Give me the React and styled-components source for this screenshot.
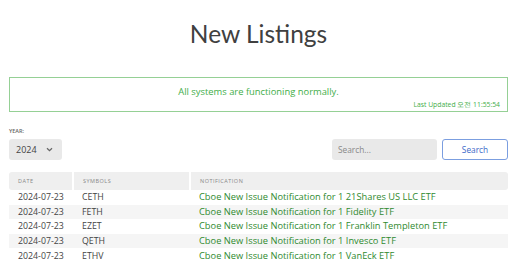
import React, { useState } from 'react';
import styled, { createGlobalStyle } from 'styled-components';

const GlobalStyle = createGlobalStyle`
  html, body {
    margin: 0;
    padding: 0;
    background: #ffffff;
    font-family: "Open Sans", "Noto Sans", sans-serif;
    color: #333333;
  }
  * { box-sizing: border-box; }
`;

const rows = [
  { date: '2024-07-23', symbol: 'CETH', note: 'Cboe New Issue Notification for 1 21Shares US LLC ETF' },
  { date: '2024-07-23', symbol: 'FETH', note: 'Cboe New Issue Notification for 1 Fidelity ETF' },
  { date: '2024-07-23', symbol: 'EZET', note: 'Cboe New Issue Notification for 1 Franklin Templeton ETF' },
  { date: '2024-07-23', symbol: 'QETH', note: 'Cboe New Issue Notification for 1 Invesco ETF' },
  { date: '2024-07-23', symbol: 'ETHV', note: 'Cboe New Issue Notification for 1 VanEck ETF' },
];

const App = () => {
  const [query, setQuery] = useState('');

  return (
    <>
      <GlobalStyle />
      <Page>
        <Title>New Listings</Title>

        <StatusBox>
          <StatusText>All systems are functioning normally.</StatusText>
          <Updated>Last Updated 오전 11:55:54</Updated>
        </StatusBox>

        <Controls>
          <YearGroup>
            <Label>YEAR:</Label>
            <Select>
              <span>2024</span>
              <svg width="7" height="5" viewBox="0 0 7 5">
                <path d="M1 1.2 L3.5 3.6 L6 1.2" fill="none" stroke="#666" strokeWidth="1.3" />
              </svg>
            </Select>
          </YearGroup>
          <SearchGroup>
            <SearchInput
              placeholder="Search..."
              value={query}
              onChange={(e) => setQuery(e.target.value)}
            />
            <SearchButton>Search</SearchButton>
          </SearchGroup>
        </Controls>

        <Table>
          <thead>
            <tr>
              <Th width="64px">Date</Th>
              <Th width="117px">Symbols</Th>
              <Th>Notification</Th>
            </tr>
          </thead>
          <tbody>
            {rows.map((r, i) => (
              <Row key={r.symbol} striped={i % 2 === 1}>
                <Td>{r.date}</Td>
                <Td>{r.symbol}</Td>
                <NoteTd>{r.note}</NoteTd>
              </Row>
            ))}
          </tbody>
        </Table>
      </Page>
    </>
  );
};

const Page = styled.div`
  padding: 0 4px 0 9px;
  width: 512px;
`;

const Title = styled.h1`
  margin: 0;
  padding-top: 16px;
  height: 77px;
  text-align: center;
  font-family: Lato, "Noto Sans", sans-serif;
  font-weight: 400;
  font-size: 24.5px;
  line-height: 36px;
  color: #404040;
`;

const StatusBox = styled.div`
  border: 1px solid #95d095;
  height: 35px;
  display: flex;
  flex-direction: column;
  align-items: center;
  padding-top: 6px;
`;

const StatusText = styled.div`
  color: #3fae49;
  font-size: 9.4px;
  line-height: 15px;
`;

const Updated = styled.div`
  align-self: flex-end;
  margin-right: 7px;
  color: #3fae49;
  font-size: 6.8px;
  line-height: 10px;
  margin-top: 1px;
`;

const Controls = styled.div`
  display: flex;
  justify-content: space-between;
  align-items: flex-end;
  margin-top: 15px;
`;

const YearGroup = styled.div`
  display: flex;
  flex-direction: column;
`;

const Label = styled.div`
  font-size: 5.5px;
  line-height: 8px;
  color: #666;
  font-weight: 600;
  margin-bottom: 4px;
`;

const Select = styled.div`
  width: 53px;
  height: 21px;
  background: #e9e9e9;
  border-radius: 3px;
  display: flex;
  align-items: center;
  justify-content: space-between;
  padding: 0 9px 0 7px;
  font-size: 9px;
  color: #444;
`;

const SearchGroup = styled.div`
  display: flex;
  gap: 5px;
`;

const SearchInput = styled.input`
  width: 105px;
  height: 21px;
  border: none;
  border-radius: 3px;
  background: #e9e9e9;
  padding: 0 6px;
  font-family: "Open Sans", sans-serif;
  font-size: 8.3px;
  color: #555;
  outline: none;
  &::placeholder { color: #888; }
`;

const SearchButton = styled.button`
  width: 66px;
  height: 21px;
  border: 1px solid #7b9ee0;
  border-radius: 3px;
  background: #fff;
  color: #3a68c8;
  font-family: "Open Sans", sans-serif;
  font-size: 8.3px;
  padding: 0;
`;

const Table = styled.table`
  width: 499px;
  margin-top: 12px;
  border-collapse: collapse;
`;

const Th = styled.th`
  width: ${({ width }) => width || 'auto'};
  height: 18px;
  background: #efefef;
  text-align: left;
  padding: 0 0 0 9px;
  font-size: 5.5px;
  font-weight: 400;
  letter-spacing: 0.5px;
  text-transform: uppercase;
  color: #888;
  border-right: 2px solid #fff;
  &:first-child { border-radius: 3px 0 0 3px; }
  &:last-child { border-right: none; border-radius: 0 3px 3px 0; }
`;

const Row = styled.tr`
  height: 14.6px;
  background: ${({ striped }) => (striped ? '#f5f5f5' : '#ffffff')};
`;

const Td = styled.td`
  padding: 0 0 0 9px;
  font-size: 8.8px;
  line-height: 14px;
  color: #444;
  white-space: nowrap;
`;

const NoteTd = styled(Td)`
  font-size: 9.3px;
  color: #2f8a2f;
`;

export default App;
